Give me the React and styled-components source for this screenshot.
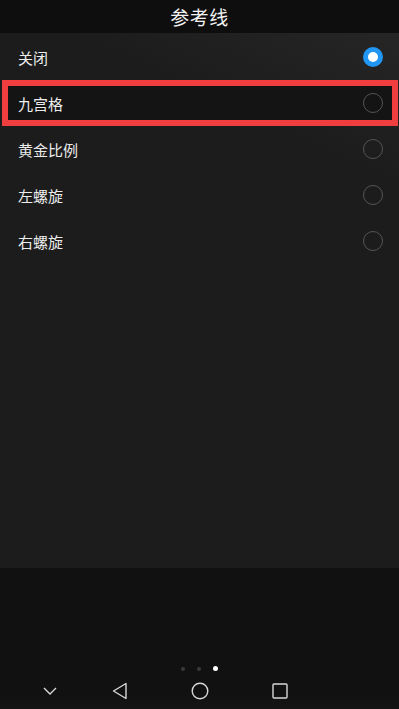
import React, { useState } from "react";
import styled, { createGlobalStyle } from "styled-components";

const GlobalStyle = createGlobalStyle`
  html, body {
    margin: 0;
    padding: 0;
    background: #111111;
  }
  body {
    font-family: "Noto Sans CJK SC", "Noto Sans", sans-serif;
  }
`;

const options = ["关闭", "九宫格", "黄金比例", "左螺旋", "右螺旋"];

export default function App() {
  const [selected, setSelected] = useState(0);

  return (
    <Screen>
      <GlobalStyle />
      <TitleBar>参考线</TitleBar>
      <Panel>
        {options.map((label, i) => (
          <Row key={label} highlight={i === 1} onClick={() => setSelected(i)}>
            <Label>{label}</Label>
            <Radio checked={i === selected} />
          </Row>
        ))}
      </Panel>
      <Bottom>
        <Dots>
          <Dot />
          <Dot />
          <Dot active />
        </Dots>
        <NavBar>
          <NavButton>
            <svg width="14" height="8" viewBox="0 0 14 8">
              <polyline points="1,1 7,7 13,1" fill="none" stroke="#d8d8d8" strokeWidth="1.4" />
            </svg>
          </NavButton>
          <NavButton>
            <svg width="16" height="18" viewBox="0 0 16 18">
              <polygon points="14,1.5 14,16.5 1.5,9" fill="none" stroke="#d8d8d8" strokeWidth="1.4" strokeLinejoin="round" />
            </svg>
          </NavButton>
          <NavButton>
            <svg width="18" height="18" viewBox="0 0 18 18">
              <circle cx="9" cy="9" r="7.8" fill="none" stroke="#d8d8d8" strokeWidth="1.4" />
            </svg>
          </NavButton>
          <NavButton>
            <svg width="16" height="16" viewBox="0 0 16 16">
              <rect x="1" y="1" width="14" height="14" rx="1" fill="none" stroke="#d8d8d8" strokeWidth="1.4" />
            </svg>
          </NavButton>
        </NavBar>
      </Bottom>
    </Screen>
  );
}

// #####################################################################

const Screen = styled.div`
  width: 399px;
  height: 709px;
  display: flex;
  flex-direction: column;
  background: #111111;
  overflow: hidden;
`;

const TitleBar = styled.div`
  height: 33px;
  flex: none;
  display: flex;
  align-items: center;
  justify-content: center;
  background: #0e0e0e;
  color: #f2f2f2;
  font-size: 19px;
  letter-spacing: 0.5px;
`;

const Panel = styled.div`
  height: 535px;
  flex: none;
  padding-top: 1px;
  box-sizing: border-box;
  background:
    linear-gradient(205deg, rgba(255,255,255,0.045) 0%, rgba(255,255,255,0) 22%),
    #1c1c1c;
`;

const Row = styled.div`
  height: 46px;
  display: flex;
  align-items: center;
  justify-content: space-between;
  margin: ${(p) => (p.highlight ? "0 1px 0 2px" : "0")};
  padding-left: ${(p) => (p.highlight ? "16px" : "18px")};
  padding-right: ${(p) => (p.highlight ? "15px" : "16px")};
  background: ${(p) => (p.highlight ? "#141414" : "transparent")};
  box-shadow: ${(p) => (p.highlight ? "inset 0 0 0 6px #ef3d40" : "none")};
  cursor: pointer;
`;

const Label = styled.span`
  color: #ededed;
  font-size: 15px;
`;

const Radio = styled.span`
  width: 20px;
  height: 20px;
  box-sizing: border-box;
  border-radius: 50%;
  border: ${(p) => (p.checked ? "5px solid #2196f3" : "1.5px solid #555555")};
  background: ${(p) => (p.checked ? "#ffffff" : "transparent")};
`;

const Bottom = styled.div`
  flex: 1;
  display: flex;
  flex-direction: column;
  justify-content: flex-end;
  background: #111111;
`;

const Dots = styled.div`
  display: flex;
  justify-content: center;
  align-items: center;
  gap: 12px;
  margin-bottom: 2px;
`;

const Dot = styled.span`
  width: ${(p) => (p.active ? "5px" : "4px")};
  height: ${(p) => (p.active ? "5px" : "4px")};
  border-radius: 50%;
  background: ${(p) => (p.active ? "#ffffff" : "#3a3a3a")};
`;

const NavBar = styled.div`
  height: 36px;
  display: grid;
  grid-template-columns: 60px 80px 80px 80px;
  padding-left: 20px;
  align-items: center;
  background: linear-gradient(#111111 60%, #151515);
`;

const NavButton = styled.div`
  display: flex;
  align-items: center;
  justify-content: center;
  height: 100%;
`;
